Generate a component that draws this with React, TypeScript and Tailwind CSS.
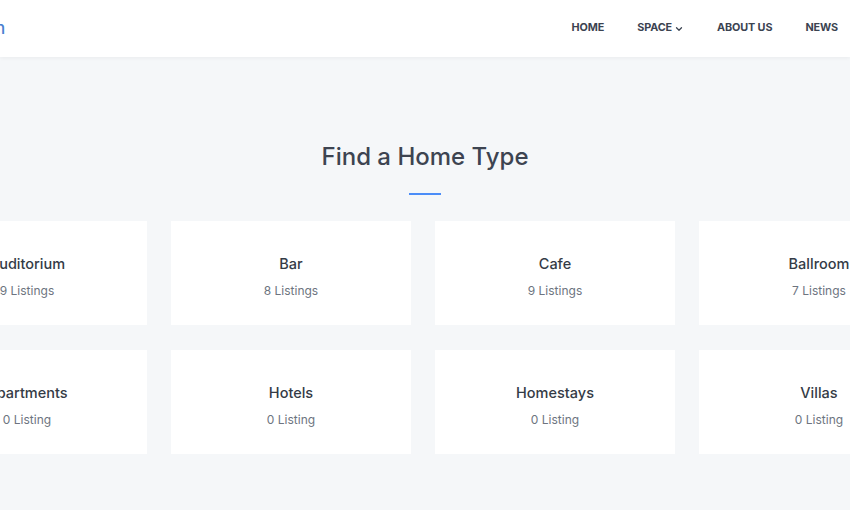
import { ChevronDown } from "lucide-react";

const types = [
  { name: "Auditorium", count: "9 Listings" },
  { name: "Bar", count: "8 Listings" },
  { name: "Cafe", count: "9 Listings" },
  { name: "Ballroom", count: "7 Listings" },
  { name: "Apartments", count: "0 Listing" },
  { name: "Hotels", count: "0 Listing" },
  { name: "Homestays", count: "0 Listing" },
  { name: "Villas", count: "0 Listing" },
];

const nav = ["HOME", "SPACE", "ABOUT US", "NEWS"];

export default function App() {
  return (
    <div
      className="min-h-[510px] w-[850px] overflow-hidden bg-[#f5f7f9]"
      style={{ fontFamily: "Inter, 'Noto Sans', sans-serif" }}
    >
      {/* Header */}
      <header className="relative z-10 flex h-[57px] items-center justify-between bg-white pr-[12px] shadow-[0_1px_4px_rgba(0,0,0,0.05)]">
        <span className="ml-[-5px] text-[17px] font-medium text-[#4a7fd0]">n</span>
        <nav className="flex items-center gap-[33px]">
          {nav.map((item) => (
            <a
              key={item}
              className="flex items-center gap-[2px] text-[10.8px] font-bold tracking-[-0.1px] text-[#3b4351]"
            >
              {item}
              {item === "SPACE" && <ChevronDown size={10} strokeWidth={3} />}
            </a>
          ))}
        </nav>
      </header>

      {/* Section */}
      <section className="pt-[85px] pb-[56px]">
        <div className="text-center">
          <h2 className="text-[24px] font-medium leading-[30px] text-[#3d4451]">
            Find a Home Type
          </h2>
          <div className="mx-auto mt-[21px] h-[2px] w-[32px] bg-[#4b8df8]" />
        </div>

        <div className="mt-[26px] flex justify-center">
          <div className="mr-[4px] grid w-[1032px] shrink-0 grid-cols-4 gap-x-[24px] gap-y-[25px]">
            {types.map((t) => (
              <div
                key={t.name}
                className="flex h-[104px] flex-col items-center justify-center bg-white pt-[6px]"
              >
                <p className="text-[14.5px] font-medium leading-[20px] text-[#343b46]">
                  {t.name}
                </p>
                <p className="mt-[9px] text-[12px] leading-[16px] text-[#6d7480]">
                  {t.count}
                </p>
              </div>
            ))}
          </div>
        </div>
      </section>
    </div>
  );
}
